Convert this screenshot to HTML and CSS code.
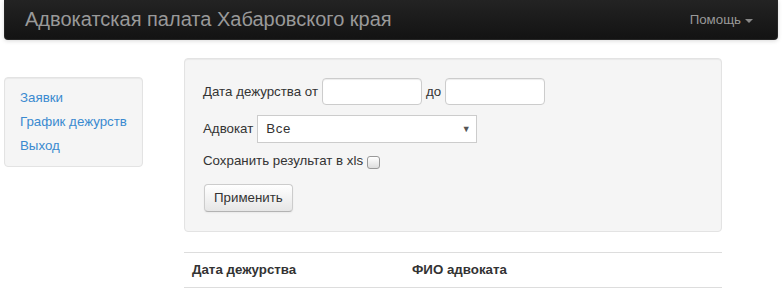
FILE: index.html
```html
<!DOCTYPE html>
<html lang="ru">
<head>
    <meta charset="UTF-8">
    <title>Адвокатская палата Хабаровского края</title>
    <link rel="stylesheet" href="styles.css">
</head>
<body>

<!-- Top navbar -->
<div class="navbar">
    <a class="brand" href="#">Адвокатская палата Хабаровского края</a>
    <a class="help" href="#">Помощь <span class="caret"></span></a>
</div>

<div class="layout">
    <!-- Sidebar -->
    <div class="sidebar">
        <ul class="nav-list">
            <li><a href="#">Заявки</a></li>
            <li><a href="#">График дежурств</a></li>
            <li><a href="#">Выход</a></li>
        </ul>
    </div>

    <!-- Main content -->
    <div class="content">
        <form class="well filter-form">
            <div class="form-row">
                <label>Дата дежурства от</label>
                <input type="text" class="input-date">
                <label>до</label>
                <input type="text" class="input-date">
            </div>
            <div class="form-row select-row">
                <label>Адвокат</label>
                <div class="select">
                    <span>Все</span>
                    <span class="select-arrow">&#9660;</span>
                </div>
            </div>
            <div class="form-row check-row">
                <label>Сохранить результат в xls</label>
                <span class="checkbox"></span>
            </div>
            <button type="button" class="btn">Применить</button>
        </form>

        <table class="table">
            <thead>
                <tr>
                    <th class="col-date">Дата дежурства</th>
                    <th>ФИО адвоката</th>
                </tr>
            </thead>
        </table>
    </div>
</div>

</body>
</html>
```

FILE: styles.css
```css
body {
    margin: 0;
    padding: 0;
    font-family: "Liberation Sans", Arial, sans-serif;
    font-size: 13.3px;
    line-height: 20px;
    color: #333;
    background-color: #fff;
}

a {
    color: #3a8ad0;
    text-decoration: none;
}

/* Navbar */
.navbar {
    margin: 0 4px;
    height: 40px;
    display: flex;
    align-items: center;
    justify-content: space-between;
    background: linear-gradient(to bottom, #232323, #131313);
    border: 1px solid #252525;
    border-top: none;
    border-radius: 0 0 4px 4px;
    box-shadow: 0 1px 4px rgba(0, 0, 0, 0.15);
    box-sizing: border-box;
}

.brand {
    padding: 0 0 2px 20px;
    font-size: 20px;
    color: #999;
}

.help {
    padding-right: 24px;
    color: #999;
    display: flex;
    align-items: center;
    gap: 4px;
}

.caret {
    display: inline-block;
    width: 0;
    height: 0;
    border-top: 4px solid #888;
    border-left: 4px solid transparent;
    border-right: 4px solid transparent;
    margin-top: 2px;
}

/* Layout */
.layout {
    display: flex;
    padding: 18px 0 0 4px;
}

.sidebar {
    width: 139px;
    margin-top: 19px;
    margin-right: 41px;
}

.nav-list {
    list-style: none;
    margin: 0;
    padding: 8px 15px;
    background-color: #f5f5f5;
    border: 1px solid #e3e3e3;
    border-radius: 4px;
    box-shadow: inset 0 1px 1px rgba(0, 0, 0, 0.05);
}

.nav-list li {
    line-height: 24px;
    white-space: nowrap;
}

.content {
    width: 538px;
}

/* Well / form */
.well {
    margin: 0 0 20px;
    padding: 19px 19px 19px 18px;
    background-color: #f5f5f5;
    border: 1px solid #e3e3e3;
    border-radius: 4px;
    box-shadow: inset 0 1px 1px rgba(0, 0, 0, 0.05);
}

.form-row {
    display: flex;
    align-items: center;
    margin-bottom: 10px;
}

.form-row label {
    margin-right: 4px;
}

.input-date {
    width: 100px;
    height: 27px;
    box-sizing: border-box;
    margin: 0 4px 0 0;
    border: 1px solid #ccc;
    border-radius: 4px;
    background: #fff;
    box-shadow: inset 0 1px 1px rgba(0, 0, 0, 0.075);
}

.select-row {
    margin-bottom: 8px;
}

.select {
    width: 220px;
    height: 28px;
    box-sizing: border-box;
    display: flex;
    align-items: center;
    justify-content: space-between;
    padding: 0 5px 0 8px;
    background: #fff;
    border: 1px solid #ccc;
    letter-spacing: 0.6px;
}

.select-arrow {
    font-size: 9px;
    color: #555;
}

.check-row {
    margin: 0 0 13px;
}

.checkbox {
    display: inline-block;
    width: 11px;
    height: 11px;
    border: 1px solid #999;
    border-radius: 3px;
    background: linear-gradient(to bottom, #fff, #ddd);
    margin-top: 3px;
}

.btn {
    margin-left: 1px;
    padding: 3px 9px;
    font-family: inherit;
    font-size: 13.3px;
    line-height: 20px;
    color: #333;
    background: linear-gradient(to bottom, #fff, #e6e6e6);
    border: 1px solid #ccc;
    border-bottom-color: #b3b3b3;
    border-radius: 4px;
    box-shadow: inset 0 1px 0 rgba(255, 255, 255, 0.2), 0 1px 2px rgba(0, 0, 0, 0.05);
}

/* Table */
.table {
    width: 100%;
    border-collapse: collapse;
}

.table th {
    text-align: left;
    padding: 7px 8px;
    border-top: 1px solid #ddd;
    border-bottom: 1px solid #ddd;
    font-weight: bold;
}

.col-date {
    width: 204px;
}
```
